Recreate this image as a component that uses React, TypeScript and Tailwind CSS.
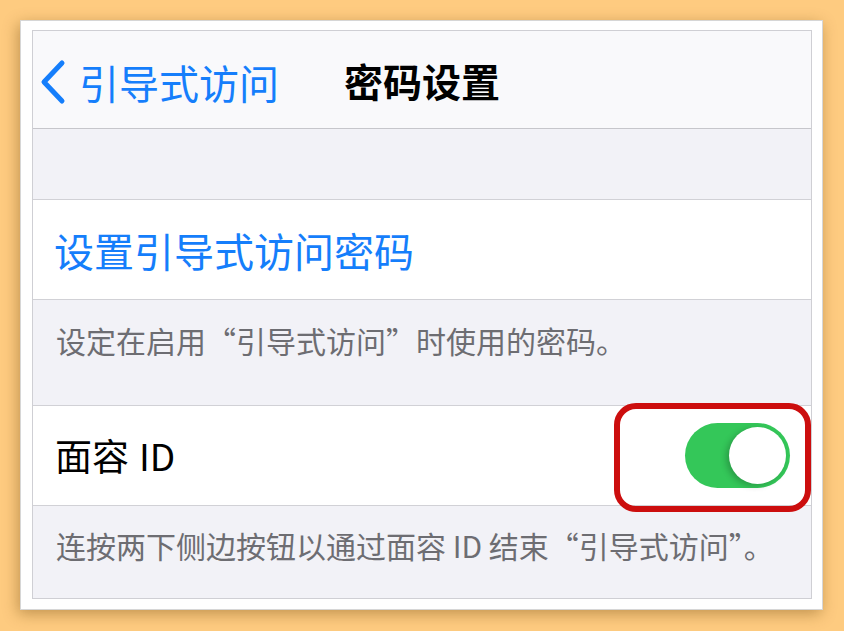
const FONT = "font-['Noto_Sans_CJK_SC','Noto_Sans',sans-serif]";

function BackChevron() {
  return (
    <svg width="28" height="46" viewBox="0 0 28 46" fill="none" className="shrink-0">
      <path
        d="M23 4 L5 23 L23 42"
        stroke="#157EFB"
        strokeWidth="5"
        strokeLinecap="round"
        strokeLinejoin="round"
      />
    </svg>
  );
}

function Toggle() {
  return (
    <div className="w-[105px] h-[65px] rounded-full bg-[#34C759] flex items-center justify-end pr-[4px]">
      <div className="w-[57px] h-[57px] rounded-full bg-white shadow-[-3px_2px_6px_rgba(0,0,0,0.22)]" />
    </div>
  );
}

export default function App() {
  return (
    <div className={`w-[844px] h-[631px] bg-[#FECB80] pt-[20px] pl-[20px] ${FONT}`}>
      <div className="w-[803px] h-[590px] bg-white border border-[#d6d6d6] shadow-[-2px_4px_14px_rgba(120,80,20,0.45)] pt-[9px] pl-[11px]">
        <div className="w-[780px] h-[569px] border border-[#cfcfd4] bg-[#F2F2F7] overflow-hidden flex flex-col">
          {/* nav bar */}
          <div className="relative h-[98px] shrink-0 bg-[#F9F9FB] border-b border-[#c6c6cb] flex items-center">
            <div className="flex items-center pl-[6px] pt-[4px] gap-[12px]">
              <BackChevron />
              <span className="text-[40px] leading-none text-[#157EFB]">引导式访问</span>
            </div>
            <div className="absolute inset-0 flex items-center justify-center pt-[2px]">
              <span className="text-[39px] leading-none font-bold text-black">密码设置</span>
            </div>
          </div>

          <div className="h-[70px] shrink-0" />

          {/* passcode row */}
          <div className="h-[101px] shrink-0 bg-white border-y border-[#d1d1d6] flex items-center pl-[21px]">
            <span className="text-[40px] leading-none text-[#157EFB]">设置引导式访问密码</span>
          </div>

          <div className="h-[105px] shrink-0 pt-[22px] pl-[23px]">
            <p className="text-[30px] leading-[36px] text-[#6D6D72]">
              设定在启用“引导式访问”时使用的密码。
            </p>
          </div>

          {/* face id row */}
          <div className="relative h-[101px] shrink-0 bg-white border-y border-[#d1d1d6] flex items-center justify-between pl-[22px] pr-[21px]">
            <span className="text-[37px] leading-none text-black flex items-center">
              面容<span className="ml-[10px]">ID</span>
            </span>
            <Toggle />
            <div className="absolute right-0 top-[-3px] w-[197px] h-[109px] border-[6px] border-[#CC0E0E] rounded-[22px]" />
          </div>

          <div className="pt-[21px] pl-[23px]">
            <p className="text-[30px] leading-[36px] text-[#6D6D72] whitespace-nowrap">
              连按两下侧边按钮以通过面容 ID 结束“引导式访问”。
            </p>
          </div>
        </div>
      </div>
    </div>
  );
}
